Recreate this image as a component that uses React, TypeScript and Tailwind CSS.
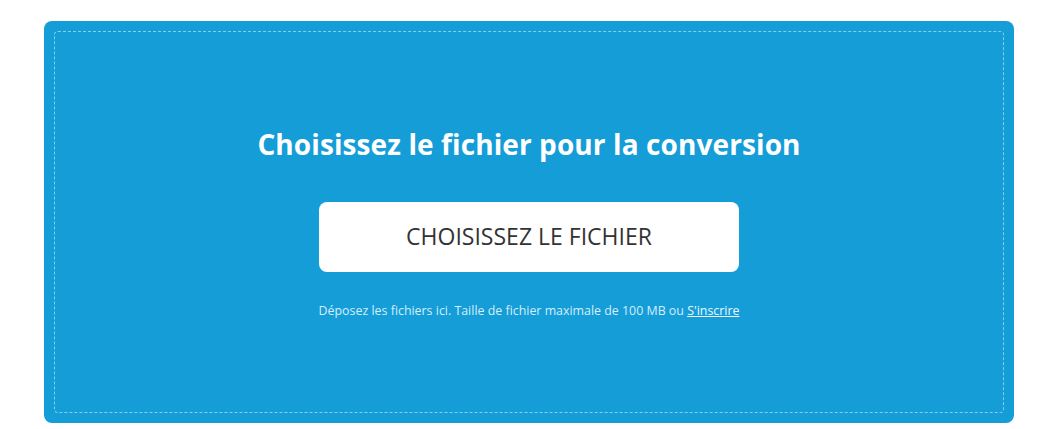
export default function App() {
  return (
    <div className="w-[1046px] h-[429px] bg-white pt-[21px] pl-[44px]" style={{ fontFamily: '"Open Sans", "Noto Sans", sans-serif' }}>
      <div className="w-[970px] h-[402px] rounded-[8px] bg-[#159dd8] p-[10px]">
        <div className="h-full w-full rounded-[4px] border border-dashed border-[#86cdee] flex flex-col items-center justify-center">
          <h1 className="text-white font-bold text-[28px] leading-[36px] tracking-[0.1px]">Choisissez le fichier pour la conversion</h1>
          <button className="mt-[40px] w-[420px] h-[70px] bg-white rounded-[8px] text-[#333333] text-[23px] flex items-center justify-center">
            CHOISISSEZ LE FICHIER
          </button>
          <p className="mt-[31px] text-[12.4px] leading-[16px] text-[#d4eefa]">
            Déposez les fichiers ici. Taille de fichier maximale de 100 MB ou{' '}
            <a href="#" className="underline text-[#eef9ff]">S'inscrire</a>
          </p>
        </div>
      </div>
    </div>
  );
}
